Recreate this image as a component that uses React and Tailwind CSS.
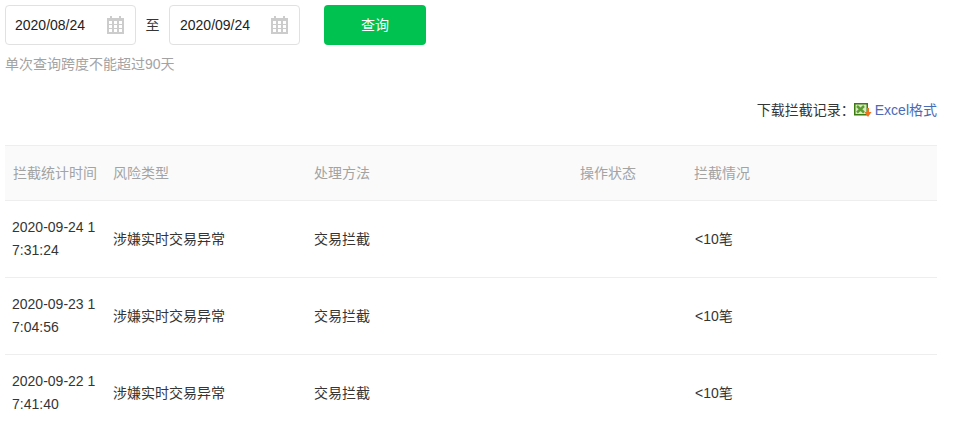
const rows = [
  ['2020-09-24 17:31:24'],
  ['2020-09-23 17:04:56'],
  ['2020-09-22 17:41:40'],
]

const CalendarIcon = () => (
  <svg width="17" height="18" viewBox="0 0 17 18" className="shrink-0">
    <path fill="#ccc" d="M0 2h3V0h2v2h7V0h2v2h3v16H0z" />
    <g fill="#fff">
      <rect x="2" y="5" width="3" height="3" />
      <rect x="7" y="5" width="3" height="3" />
      <rect x="12" y="5" width="3" height="3" />
      <rect x="2" y="9" width="3" height="3" />
      <rect x="7" y="9" width="3" height="3" />
      <rect x="12" y="9" width="3" height="3" />
      <rect x="2" y="13" width="3" height="3" />
      <rect x="7" y="13" width="3" height="3" />
      <rect x="12" y="13" width="3" height="3" />
    </g>
  </svg>
)

const ExcelIcon = () => (
  <svg width="18" height="14" viewBox="0 0 18 14" className="shrink-0">
    <rect x="0.75" y="0.75" width="12.5" height="11" fill="#d9ecc0" stroke="#3c7a12" strokeWidth="1.5" />
    <path d="M3 3l7 6.5M10 3l-7 6.5" stroke="#5d9c33" strokeWidth="2.4" />
    <path d="M13 5h2v4h2.5L14 14l-3.5-5H13z" fill="#f4701c" />
  </svg>
)

const DateBox = ({ value, textPad }) => (
  <div className={`w-[131px] h-[40px] border border-[#e1e1e1] rounded bg-white flex items-center justify-between pr-[11px] text-[14px] text-[#222] ${textPad}`}>
    <span>{value}</span>
    <CalendarIcon />
  </div>
)

const App = () => {
  return (
    <div className="w-[970px] h-[431px] overflow-hidden bg-white pl-[5px] pr-[33px] pt-[5px] text-[14px] text-[#353535] font-['Liberation_Sans','Noto_Sans_CJK_SC',sans-serif]">
      <div className="flex items-center">
        <DateBox value="2020/08/24" textPad="pl-[9px]" />
        <span className="w-[33px] text-center">至</span>
        <DateBox value="2020/09/24" textPad="pl-[10px]" />
        <button className="ml-[24px] w-[102px] h-[40px] rounded bg-[#00c250] text-white text-[14px]">查询</button>
      </div>
      <p className="mt-[9px] text-[#a3a3a3] leading-[20px]">单次查询跨度不能超过90天</p>

      <div className="mt-[26px] flex items-center justify-end h-[20px]">
        <span className="-mr-[1px]">下载拦截记录：</span>
        <span className="flex items-center gap-[3px] text-[#4a6bb5]">
          <ExcelIcon />
          Excel格式
        </span>
      </div>

      <table className="mt-[25px] w-full table-fixed border-t border-[#eee]">
        <thead>
          <tr className="h-[55px] bg-[#fafafa] text-[#a3a3a3] text-left border-b border-[#eee]">
            <th className="w-[100px] font-normal pl-[8px]">拦截统计时间</th>
            <th className="w-[201px] font-normal pl-[8px]">风险类型</th>
            <th className="w-[266px] font-normal pl-[8px]">处理方法</th>
            <th className="w-[114px] font-normal pl-[8px]">操作状态</th>
            <th className="font-normal pl-[8px]">拦截情况</th>
          </tr>
        </thead>
        <tbody>
          {rows.map(r => (
            <tr key={r[0]} className="h-[77px] border-b border-[#eee]">
              <td className="pl-[7px] leading-[23px] break-all">{r[0]}</td>
              <td className="pl-[8px]">涉嫌实时交易异常</td>
              <td className="pl-[8px]">交易拦截</td>
              <td className="pl-[8px]"></td>
              <td className="pl-[9px]">&lt;10笔</td>
            </tr>
          ))}
        </tbody>
      </table>
    </div>
  )
}

export default App
